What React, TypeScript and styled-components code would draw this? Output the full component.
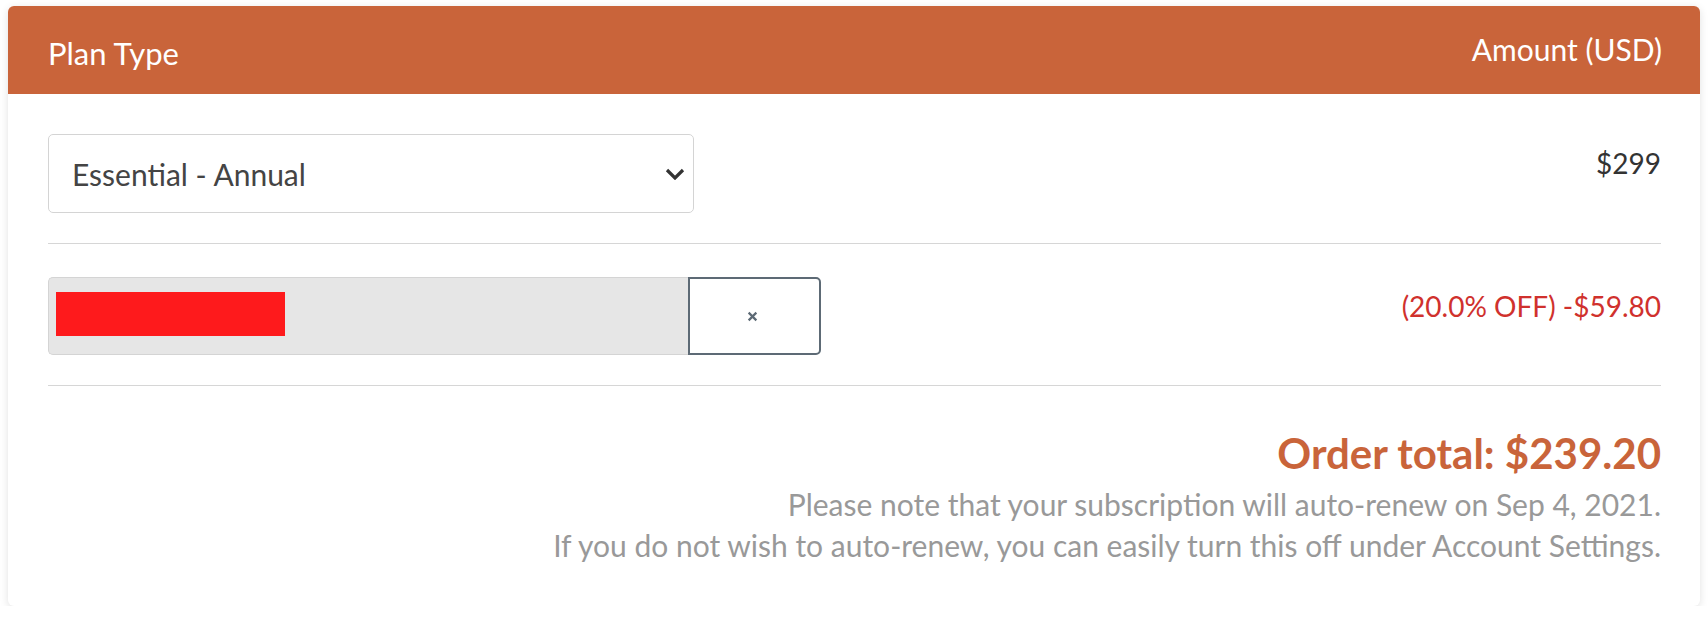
import React from "react";
import styled, { createGlobalStyle } from "styled-components";

const GlobalStyle = createGlobalStyle`
  html, body {
    margin: 0;
    padding: 0;
    background: #ffffff;
  }
  body {
    padding: 6px 8px 0;
    font-family: "Lato", "Noto Sans", sans-serif;
    -webkit-font-smoothing: antialiased;
  }
`;

const Card = styled.section`
  background: #ffffff;
  border-radius: 6px;
  box-shadow: 0 2px 8px rgba(0, 0, 0, 0.12);
  overflow: hidden;
`;

const Header = styled.header`
  height: 88px;
  background: #c9643a;
  display: flex;
  justify-content: space-between;
  align-items: center;
  padding: 0 38px 0 40px;
  color: #ffffff;
`;

const HeaderLabel = styled.div<{ $shift: number; $size: number }>`
  font-size: ${(p) => p.$size}px;
  font-weight: 400;
  line-height: 36px;
  margin-top: ${(p) => p.$shift}px;
`;

const Body = styled.div`
  padding: 0 39px 0 40px;
`;

const Row = styled.div<{ $top: number }>`
  display: flex;
  justify-content: space-between;
  align-items: flex-start;
  padding: ${(p) => p.$top}px 0 30px;
  border-bottom: 1px solid #d6d6d6;
`;

const SelectBox = styled.div`
  width: 646px;
  height: 79px;
  box-sizing: border-box;
  border: 1px solid #d4d4d4;
  border-radius: 5px;
  display: flex;
  align-items: center;
  justify-content: space-between;
  padding: 0 8px 0 23px;
  color: #444444;
  font-size: 30px;
`;

const Chevron = styled.svg`
  width: 20px;
  height: 12px;
`;

const Amount = styled.div<{ $color: string }>`
  font-size: 28px;
  line-height: 40px;
  padding-top: 9px;
  color: ${(p) => p.$color};
`;

const CouponGroup = styled.div`
  display: flex;
  height: 78px;
`;

const CouponInput = styled.div`
  width: 640px;
  box-sizing: border-box;
  background: #e6e6e6;
  border: 1px solid #d4d4d4;
  border-right: none;
  border-radius: 5px 0 0 5px;
  padding: 14px 0 0 7px;
`;

const Redaction = styled.div`
  width: 229px;
  height: 44px;
  background: #fe1a1c;
`;

const RemoveButton = styled.button`
  width: 133px;
  box-sizing: border-box;
  background: #ffffff;
  border: 2px solid #5d6a75;
  border-radius: 0 5px 5px 0;
  display: flex;
  align-items: center;
  justify-content: center;
  padding: 0 4px 0 0;
  color: #5d6a75;
`;

const Summary = styled.div`
  display: flex;
  flex-direction: column;
  align-items: flex-end;
  padding: 42px 0 40px;
`;

const Total = styled.div`
  font-size: 42px;
  font-weight: 700;
  line-height: 50px;
  color: #c9643a;
  margin-bottom: 6px;
`;

const Note = styled.p`
  margin: 0;
  font-size: 30px;
  line-height: 41px;
  color: #999999;
`;

export default function App() {
  return (
    <>
      <GlobalStyle />
      <Card>
        <Header>
          <HeaderLabel $shift={6} $size={31}>Plan Type</HeaderLabel>
          <HeaderLabel $shift={-2} $size={30}>Amount (USD)</HeaderLabel>
        </Header>
        <Body>
          <Row $top={40}>
            <SelectBox>
              <span>Essential - Annual</span>
              <Chevron viewBox="0 0 20 12">
                <path d="M2 2 L10 10 L18 2" fill="none" stroke="#333" strokeWidth="3.2" />
              </Chevron>
            </SelectBox>
            <Amount $color="#333333">$299</Amount>
          </Row>
          <Row $top={33}>
            <CouponGroup>
              <CouponInput>
                <Redaction />
              </CouponInput>
              <RemoveButton aria-label="Remove coupon">
                <svg width="11" height="11" viewBox="0 0 10 10">
                  <path d="M1.5 1.5 L8.5 8.5 M8.5 1.5 L1.5 8.5" stroke="#5d6a75" strokeWidth="2" />
                </svg>
              </RemoveButton>
            </CouponGroup>
            <Amount $color="#d0312d">(20.0% OFF) -$59.80</Amount>
          </Row>
          <Summary>
            <Total>Order total: $239.20</Total>
            <Note>Please note that your subscription will auto-renew on Sep 4, 2021.</Note>
            <Note>If you do not wish to auto-renew, you can easily turn this off under Account Settings.</Note>
          </Summary>
        </Body>
      </Card>
    </>
  );
}
